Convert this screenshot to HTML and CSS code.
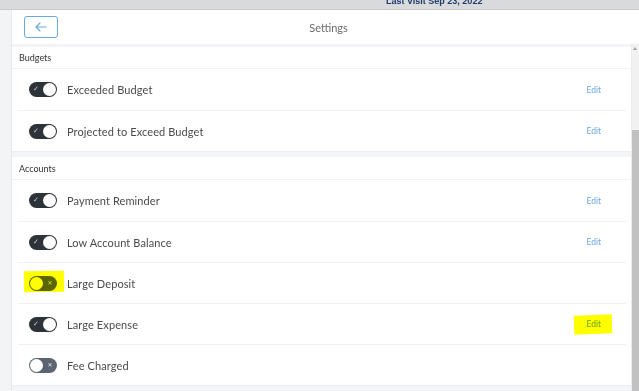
FILE: index.html
```html
<!DOCTYPE html>
<html>
<head>
<meta charset="utf-8">
<link rel="stylesheet" href="styles.css">
</head>
<body>
<div class="topbar"><span class="visit">Last Visit Sep 23, 2022</span></div>
<div class="main">
  <div class="leftstrip"></div>
  <div class="content">
    <div class="header">
      <button class="back" aria-label="Back">
        <svg width="12" height="10" viewBox="0 0 12 10"><path d="M5 1 L1 5 L5 9 M1 5 H11" fill="none" stroke="#6aa7e0" stroke-width="1.1" stroke-linecap="round" stroke-linejoin="round"/></svg>
      </button>
      <div class="title">Settings</div>
      <div class="spacer"></div>
    </div>
    <div class="body">
      <div class="list">
        <div class="band"></div>
        <div class="heading">Budgets</div>
        <div class="row">
          <span class="toggle on"><span class="mark">✓</span><span class="knob"></span></span>
          <span class="label">Exceeded Budget</span>
          <span class="edit">Edit</span>
        </div>
        <div class="row">
          <span class="toggle on"><span class="mark">✓</span><span class="knob"></span></span>
          <span class="label">Projected to Exceed Budget</span>
          <span class="edit">Edit</span>
        </div>
        <div class="band section"></div>
        <div class="heading">Accounts</div>
        <div class="row">
          <span class="toggle on"><span class="mark">✓</span><span class="knob"></span></span>
          <span class="label">Payment Reminder</span>
          <span class="edit">Edit</span>
        </div>
        <div class="row">
          <span class="toggle on"><span class="mark">✓</span><span class="knob"></span></span>
          <span class="label">Low Account Balance</span>
          <span class="edit">Edit</span>
        </div>
        <div class="row">
          <span class="toggle off"><span class="knob"></span><span class="mark">✕</span></span>
          <span class="label">Large Deposit</span>
          <span class="hl hl-toggle"></span>
        </div>
        <div class="row">
          <span class="toggle on"><span class="mark">✓</span><span class="knob"></span></span>
          <span class="label">Large Expense</span>
          <span class="edit">Edit</span>
          <span class="hl hl-edit"></span>
        </div>
        <div class="row">
          <span class="toggle off"><span class="knob"></span><span class="mark">✕</span></span>
          <span class="label">Fee Charged</span>
        </div>
        <div class="band section"></div>
      </div>
      <div class="scrollbar">
        <div class="arrow"></div>
        <div class="track"></div>
        <div class="thumb"></div>
      </div>
    </div>
  </div>
</div>
</body>
</html>
```
FILE: styles.css
```css
* { box-sizing: border-box; }
html, body { margin: 0; padding: 0; }
body {
  width: 639px;
  height: 391px;
  overflow: hidden;
  background: #fff;
  font-family: Lato, "Open Sans", sans-serif;
}
.topbar {
  height: 10px;
  background: #d9dadc;
  border-bottom: 1px solid #c9cacc;
  overflow: hidden;
  padding-left: 386px;
}
.visit {
  display: block;
  margin-top: -5px;
  font-size: 9px;
  line-height: 12px;
  font-weight: 700;
  color: #1f3a6b;
  font-family: "Liberation Sans", sans-serif;
}
.main {
  display: flex;
  height: 381px;
}
.leftstrip {
  width: 12px;
  background: #f3f4f6;
  border-right: 1px solid #e8e9eb;
}
.content {
  flex: 1;
  display: flex;
  flex-direction: column;
}
.header {
  height: 34px;
  display: flex;
  align-items: center;
  padding-left: 12px;
  flex: none;
}
.back {
  width: 34px;
  height: 22px;
  border: 1.5px solid #6aa7e0;
  border-radius: 3px;
  background: #fff;
  display: flex;
  align-items: center;
  justify-content: center;
  padding: 0;
}
.title {
  flex: 1;
  text-align: center;
  font-size: 11px;
  color: #6b6b6b;
}
.spacer { width: 40px; }
.body {
  flex: 1;
  display: flex;
  min-height: 0;
}
.list {
  flex: 1;
  border-right: 1px solid #ececec;
}
.band {
  height: 3px;
  background: #f3f5f8;
}
.band.section { height: 6px; border-top: 1px solid #eceef1; }
.heading {
  height: 22px;
  display: flex;
  align-items: center;
  padding-left: 7px;
  font-size: 9px;
  color: #333;
  border-bottom: 1px solid #f2f2f2;
}
.band.section + .heading { height: 23px; }
.row {
  position: relative;
  height: 41px;
  display: flex;
  align-items: center;
  margin: 0 5px 0 6px;
  padding-left: 11px;
  padding-right: 25px;
  border-top: 1px solid #f1f1f1;
}
.heading + .row { border-top: none; }
.toggle {
  width: 28px;
  height: 15px;
  border-radius: 8px;
  display: flex;
  align-items: center;
  padding: 0 1px;
  flex: none;
}
.toggle.on { background: #2e3339; justify-content: space-between; }
.toggle.off { background: #5b6572; justify-content: space-between; }
.knob {
  width: 13px;
  height: 13px;
  border-radius: 50%;
  background: #fff;
}
.mark {
  font-size: 7px;
  line-height: 1;
  color: #c9ccd0;
  width: 12px;
  text-align: center;
  font-family: "DejaVu Sans", sans-serif;
}
.toggle.off .mark { color: #e4e6e9; font-size: 6px; }
.label {
  margin-left: 10px;
  font-size: 11px;
  color: #4a4a4a;
  flex: 1;
  letter-spacing: 0.1px;
}
.edit {
  font-size: 8.5px;
  color: #6aa7e0;
}
.hl {
  position: absolute;
  background: #ffff00;
  mix-blend-mode: multiply;
  pointer-events: none;
}
.hl-toggle {
  left: 6px;
  top: 8px;
  width: 40px;
  height: 21px;
  transform: rotate(-1deg);
}
.hl-edit {
  right: 14px;
  top: 11px;
  width: 38px;
  height: 19px;
  transform: rotate(-2deg);
}
.scrollbar {
  width: 7px;
  background: #f1f1f1;
  display: flex;
  flex-direction: column;
  align-items: stretch;
}
.arrow {
  height: 6px;
  margin-top: 2px;
  position: relative;
}
.arrow::after {
  content: "";
  position: absolute;
  left: 1px;
  top: 1px;
  border-left: 2.5px solid transparent;
  border-right: 2.5px solid transparent;
  border-bottom: 3px solid #a3a3a3;
}
.track { height: 78px; }
.thumb { flex: 1; background: #c1c1c1; }
```
